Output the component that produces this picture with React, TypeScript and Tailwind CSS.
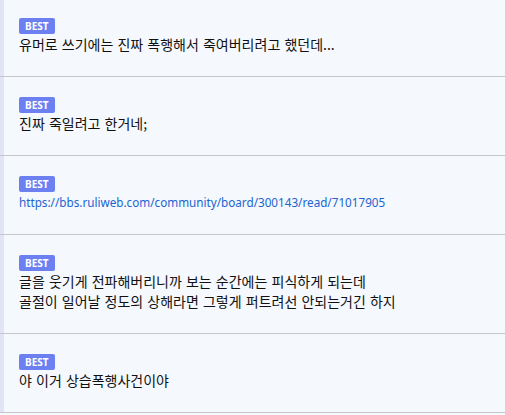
const comments: { text: string[]; link?: boolean }[] = [
  { text: ["유머로 쓰기에는 진짜 폭행해서 죽여버리려고 했던데..."] },
  { text: ["진짜 죽일려고 한거네;"] },
  { text: ["https://bbs.ruliweb.com/community/board/300143/read/71017905"], link: true },
  {
    text: [
      "글을 웃기게 전파해버리니까 보는 순간에는 피식하게 되는데",
      "골절이 일어날 정도의 상해라면 그렇게 퍼트려선 안되는거긴 하지",
    ],
  },
  { text: ["야 이거 상습폭행사건이야"] },
];

export default function App() {
  return (
    <div className="w-[505px] h-[415px] overflow-hidden bg-[#f5f8fd] font-['Noto_Sans_CJK_KR','Noto_Sans',sans-serif]">
      <div className="flex flex-col -mt-[2px]">
        {comments.map((c, i) => (
          <div key={i} className="flex border-b border-[#c6c7cc]">
            <div className="w-[4px] shrink-0 bg-[#e0e4f5]" />
            <div className="flex flex-col items-start pl-[15px] pt-[20px] pb-[22px]">
              <span className="h-[16px] px-[6px] rounded-[2px] bg-[#6c80f2] text-white text-[10px] font-bold leading-[16px] font-['Noto_Sans',sans-serif]">
                BEST
              </span>
              <div>
                {c.text.map((t, j) =>
                  c.link ? (
                    <a key={j} className="block text-[11.7px] leading-[20px] text-[#1b64d0] font-['Noto_Sans',sans-serif]">
                      {t}
                    </a>
                  ) : (
                    <p key={j} className="text-[14px] leading-[20px] text-[#111] [word-spacing:1px]">
                      {t}
                    </p>
                  )
                )}
              </div>
            </div>
          </div>
        ))}
      </div>
    </div>
  );
}
